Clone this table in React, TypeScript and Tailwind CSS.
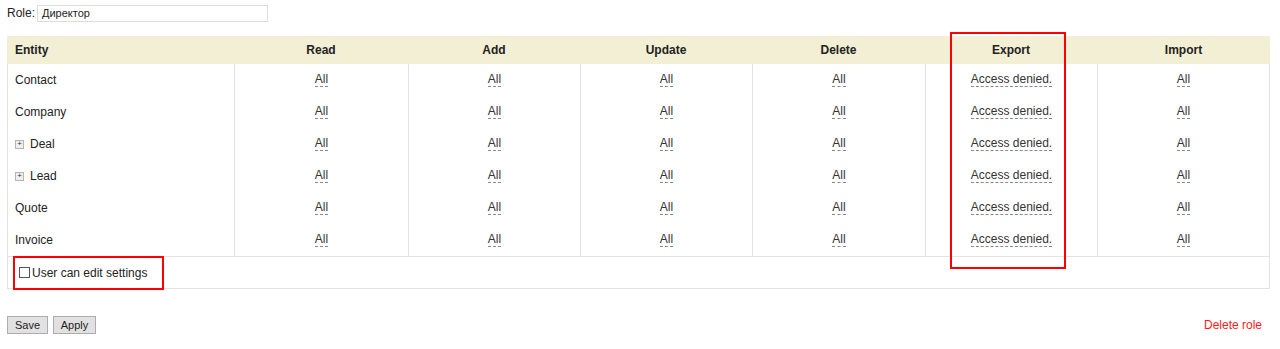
import React from 'react';

const cols = ['Read', 'Add', 'Update', 'Delete', 'Export', 'Import'];
const widths = ['w-[227px]', 'w-[174px]', 'w-[172px]', 'w-[172px]', 'w-[173px]', 'w-[172px]', 'w-[173px]'];
const bodyWidths = ['w-[226px]', 'w-[174px]', 'w-[172px]', 'w-[172px]', 'w-[173px]', 'w-[172px]', 'w-[172px]'];

type Row = { name: string; expandable?: boolean };

const rows: Row[] = [
  { name: 'Contact' },
  { name: 'Company' },
  { name: 'Deal', expandable: true },
  { name: 'Lead', expandable: true },
  { name: 'Quote' },
  { name: 'Invoice' },
];

const Perm: React.FC<{ text: string }> = ({ text }) => (
  <span className="border-b border-dashed border-[#8a8a8a] leading-[13px] text-[#333]">{text}</span>
);

const PlusBox = () => (
  <span className="mr-[6px] inline-flex h-[9px] w-[9px] items-center justify-center border border-[#b5b5b5] bg-[#eee] text-[8px] leading-none text-[#333]">
    +
  </span>
);

export default function App() {
  return (
    <div className="relative h-[349px] w-[1280px] bg-white text-[12px] text-[#222]" style={{ fontFamily: '"Liberation Sans", Arial, sans-serif' }}>
      {/* role name */}
      <div className="flex items-center pl-[7px] pt-[4px]">
        <span className="mr-[2px]">Role:</span>
        <div className="flex h-[17px] w-[231px] items-center border border-[#ddd] px-[4px] text-[11px]">Директор</div>
      </div>

      {/* permissions table */}
      <div className="ml-[7px] mt-[14px] w-[1263px]">
        <div className="flex h-[28px] bg-[#f3efd4] font-bold">
          <div className={`${widths[0]} flex items-center pl-[8px]`}>Entity</div>
          {cols.map((c, i) => (
            <div key={c} className={`${widths[i + 1]} flex items-center justify-center`}>{c}</div>
          ))}
        </div>
        <div className="border-x border-b border-[#e3e3e3]">
          {rows.map((r) => (
            <div key={r.name} className="flex h-[32px]">
              <div className={`${bodyWidths[0]} flex shrink-0 items-center pl-[7px]`}>
                {r.expandable && <PlusBox />}
                {r.name}
              </div>
              {cols.map((c, i) => (
                <div key={c} className={`${bodyWidths[i + 1]} flex shrink-0 items-center justify-center border-l border-[#e3e3e3]`}>
                  <Perm text={c === 'Export' ? 'Access denied.' : 'All'} />
                </div>
              ))}
            </div>
          ))}
          <div className="flex h-[32px] items-center border-t border-[#e3e3e3] pl-[11px]">
            <span className="mr-[2px] inline-block h-[11px] w-[11px] border border-[#555] bg-white" />
            <span className="text-[12px]">User can edit settings</span>
          </div>
        </div>
      </div>

      {/* actions */}
      <div className="mt-[27px] flex items-center justify-between pl-[7px] pr-[18px]">
        <div className="flex gap-[5px]">
          <button className="h-[18px] w-[41px] border border-[#adadad] bg-[#e1e1e1] text-[11px] text-[#222]">Save</button>
          <button className="h-[18px] w-[43px] border border-[#adadad] bg-[#e1e1e1] text-[11px] text-[#222]">Apply</button>
        </div>
        <span className="text-[12px] text-[#ff1a1a]">Delete role</span>
      </div>

      {/* highlight overlays */}
      <div className="pointer-events-none absolute left-[950px] top-[32px] h-[237px] w-[116px] border-2 border-[#ff0000]" />
      <div className="pointer-events-none absolute left-[13px] top-[256px] h-[34px] w-[151px] border-2 border-[#ff0000]" />
    </div>
  );
}
